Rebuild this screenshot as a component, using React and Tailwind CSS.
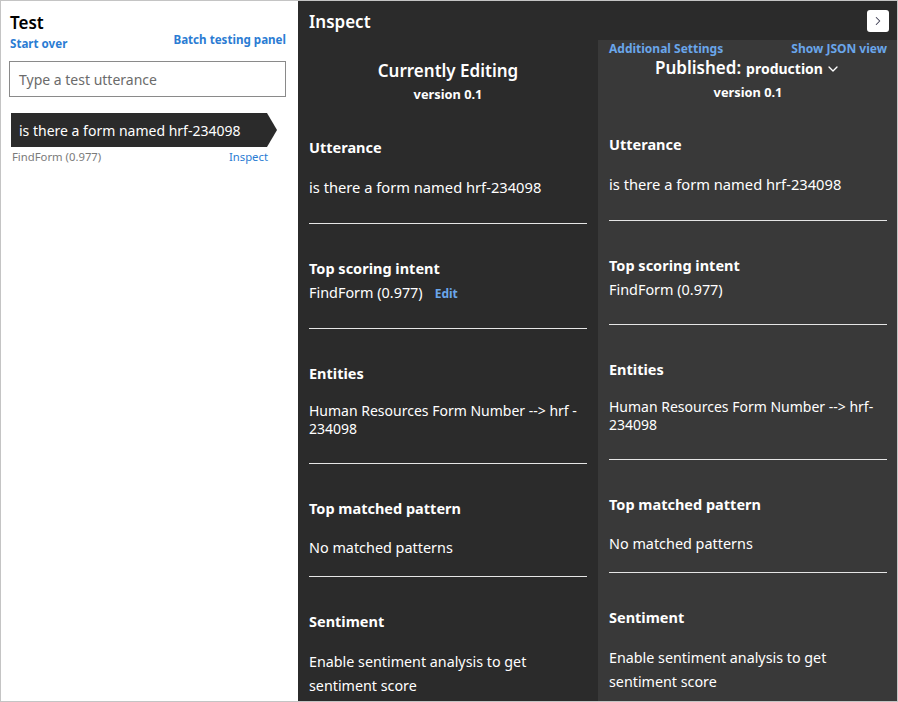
import { ChevronDown, ChevronRight } from 'lucide-react';

const font = { fontFamily: '"Noto Sans", "Open Sans", sans-serif' };

const Divider = () => <div className="h-px bg-[#e6e6e6]" />;

const Section = ({ title, children, gap = 'mt-[20px]', after = 'mt-[25px]', last }) => (
  <div>
    <div className="text-[14.5px] leading-[20px] font-bold text-white">{title}</div>
    <div className={`${gap} text-[14px] text-white`}>{children}</div>
    {!last && (
      <div className={after}>
        <Divider />
      </div>
    )}
  </div>
);

const Column = ({ right }) => {
  const entity = right ? (
    <>Human Resources Form Number --&gt; hrf-<br />234098</>
  ) : (
    <>Human Resources Form Number --&gt; hrf -<br />234098</>
  );
  return (
    <div className="flex flex-col gap-[34px]">
      <Section title="Utterance" after="mt-[26px]">
        <div className="leading-[20px] text-[14.7px]">is there a form named hrf-234098</div>
      </Section>
      <Section title="Top scoring intent" gap="mt-[5px]" after="mt-[24px]">
        <div className="leading-[20px] flex items-baseline text-[14.4px]">
          FindForm (0.977)
          {!right && <span className="ml-[12px] text-[12px] font-bold text-[#6aa6ea]">Edit</span>}
        </div>
      </Section>
      <Section title="Entities" gap="mt-[19px]" after="mt-[25px]">
        <div className="leading-[18px]">{entity}</div>
      </Section>
      <Section title="Top matched pattern" after="mt-[18px]">
        <div className="leading-[20px] text-[14.4px]">No matched patterns</div>
      </Section>
      <Section title="Sentiment" gap="mt-[19px]" last>
        <div className="leading-[24px] text-[14.3px]">
          Enable sentiment analysis to get
          <br />
          sentiment score
        </div>
      </Section>
    </div>
  );
};

export default function App() {
  return (
    <div style={font} className="w-[898px] h-[702px] border border-[#c4c4c4] flex overflow-hidden bg-white">
      {/* Test panel */}
      <div className="w-[297px] shrink-0 bg-white pl-[8px] pr-[12px] pt-[12px]">
        <div className="text-[17px] leading-[20px] font-semibold text-black pl-px">Test</div>
        <div className="flex justify-between items-end text-[11.6px] font-bold text-[#2b7cd3] leading-[14px] pl-px">
          <span className="mt-[4px]">Start over</span>
          <span className="-mt-[4px] mb-[4px]">Batch testing panel</span>
        </div>
        <div className="mt-[10px] h-[36px] border border-[#8a8a8a] flex items-center px-[9px] text-[14px] text-[#6b6b6b]">
          Type a test utterance
        </div>
        <div className="mt-[16px] flex items-center pl-[2px]">
          <div className="h-[34px] w-[256px] bg-[#2b2b2b] text-white text-[14px] flex items-center px-[8px]">
            is there a form named hrf-234098
          </div>
          <div className="w-0 h-0 border-y-[17px] border-y-transparent border-l-[10px] border-l-[#2b2b2b]" />
        </div>
        <div className="mt-[2px] flex justify-between w-[259px] text-[11.3px] leading-[16px] pl-[3px]">
          <span className="text-[#7a7a7a]">FindForm (0.977)</span>
          <span className="text-[#2b7cd3]">Inspect</span>
        </div>
      </div>

      {/* Inspect panel */}
      <div className="flex-1 flex flex-col bg-[#2b2b2b] text-white">
        <div className="h-[39px] shrink-0 flex items-center justify-between pl-[11px] pr-[8px]">
          <span className="text-[17px] font-semibold leading-[24px] mt-[3px]">Inspect</span>
          <div className="w-[22px] h-[22px] bg-white rounded-[3px] flex items-center justify-center">
            <ChevronRight size={14} strokeWidth={1.8} className="text-[#3a3a50]" />
          </div>
        </div>
        <div className="flex flex-1">
          <div className="w-[300px] shrink-0 px-[11px]">
            <div className="pt-[19px] text-center">
              <div className="text-[17px] font-semibold leading-[24px]">Currently Editing</div>
              <div className="mt-[3px] text-[12.8px] font-bold leading-[16px]">version 0.1</div>
            </div>
            <div className="mt-[35px]">
              <Column />
            </div>
          </div>
          <div className="flex-1 bg-[#393939] pl-[11px] pr-[10px]">
            <div className="pt-[2px] flex justify-between text-[12px] font-bold text-[#6aa6ea] leading-[14px]">
              <span>Additional Settings</span>
              <span>Show JSON view</span>
            </div>
            <div className="text-center">
              <div className="flex items-baseline justify-center leading-[24px]">
                <span className="text-[17px] font-semibold">Published:</span>
                <span className="ml-[5px] text-[14px] font-bold">production</span>
                <ChevronDown size={16} strokeWidth={2} className="ml-[2px] self-center" />
              </div>
              <div className="mt-[3px] text-[12.8px] font-bold leading-[16px]">version 0.1</div>
            </div>
            <div className="mt-[34px]">
              <Column right />
            </div>
          </div>
        </div>
      </div>
    </div>
  );
}
